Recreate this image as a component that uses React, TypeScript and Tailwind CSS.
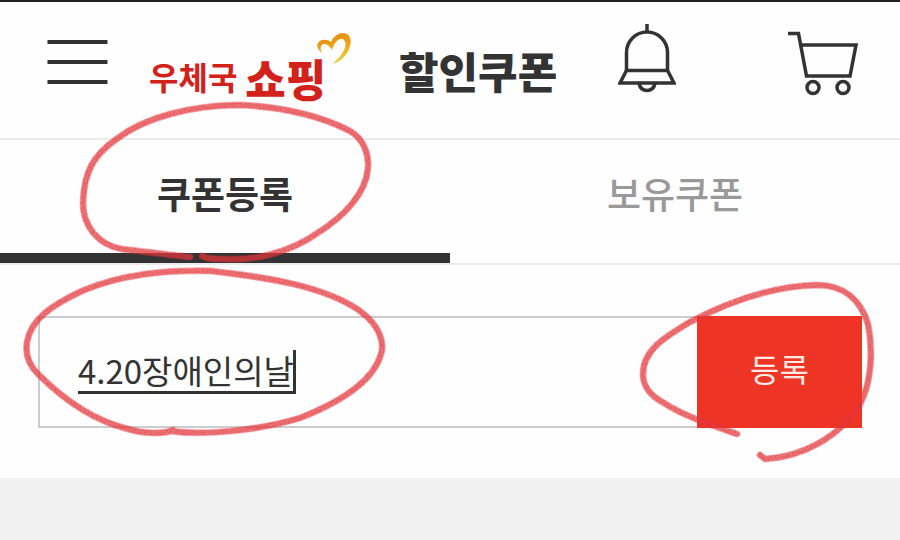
import React, { useState } from "react";

const INK = "#333333";

function MenuIcon() {
  return (
    <svg className="h-[76px] w-[62px]" viewBox="0 0 62 76" fill="none" stroke={INK} strokeWidth="4" aria-hidden="true">
      <path d="M0.500 18H60.500M0.500 38H60.500M0.500 58H60.500" />
    </svg>
  );
}

function BellIcon() {
  return (
    <svg className="h-[76px] w-[58px]" viewBox="0 0 58 76" fill="none" stroke={INK} strokeWidth="3.500" aria-hidden="true">
      <path d="M29 0V8" />
      <path d="M8.500 47V28.500a20.500 20.500 0 0 1 41 0V47" />
      <path d="M8.500 46.500H49.500L56 59H2Z" />
      <path d="M21 59.500c1 4.500 4 7 8 7s7-2.500 8-7" />
    </svg>
  );
}

function CartIcon() {
  return (
    <svg className="h-[76px] w-[70px]" viewBox="0 0 70 76" fill="none" stroke={INK} strokeWidth="3.500" aria-hidden="true">
      <path d="M0 9.500H10.500L18.500 52H62L68 21H13" />
      <circle cx="25" cy="63.500" r="6" />
      <circle cx="55" cy="63.500" r="6" />
    </svg>
  );
}

function HeartMark() {
  return (
    <svg className="absolute top-[8px] right-0 h-[34px] w-[34px]" viewBox="0 0 34 34" aria-hidden="true">
      <defs>
        <linearGradient id="gold" x1="0" y1="0" x2="0.3" y2="1">
          <stop offset="0" stopColor="#d98a17" />
          <stop offset="0.5" stopColor="#ef9f12" />
          <stop offset="1" stopColor="#e8cf3a" />
        </linearGradient>
      </defs>
      <path
        fill="url(#gold)"
        d="M5 21C1 18-1 14 1 11c2-3.500 9-4.500 13-1C16 5 21 1 26 1c6 0 8.500 5 7.500 11-1.500 9-8 17-18 20C22 26 28.500 19 28.500 12c0-3-1.500-5-4-5-5 0-8 6-9.500 11C13 14 10 11.500 7 12c-4 .5-4 4.500-2 9Z"
      />
    </svg>
  );
}

const STROKES = [
  "M190 257C170 255 148 252 122 249C98 245 83 226 83 203C84 172 93 155 118 138C146 117 190 106 236 105C285 106 325 118 350 131C364 139 369 155 368 168C366 193 345 216 316 234C290 252 255 261 226 259C215 259 207 259 202 256",
  "M173 430C165 434 145 434 128 429C91 420 60 396 38 374C28 364 25 354 27 342C31 319 52 305 82 291C122 274 165 270 211 271C265 277 325 286 360 311C379 325 385 342 381 354C373 383 338 403 300 418C260 430 205 436 170 431",
  "M737 434C711 425 684 416 664 403C649 395 643 386 643 374C643 350 665 337 690 322C728 302 772 286 817 285C845 285 861 301 868 324C873 349 872 382 860 404C840 437 802 457 765 459L760 455",
];

function PenMarks() {
  return (
    <svg className="pointer-events-none absolute inset-x-0 top-0 w-full" viewBox="0 0 900 540" fill="none" aria-hidden="true">
      <defs>
        <filter id="crayon" x="-5%" y="-5%" width="110%" height="110%">
          <feTurbulence type="fractalNoise" baseFrequency="0.6" numOctaves="2" seed="4" result="noise" />
          <feColorMatrix in="noise" type="matrix" values="0 0 0 0 0  0 0 0 0 0  0 0 0 0 0  2.500 0 0 0 -0.600" result="grain" />
          <feComposite in="SourceGraphic" in2="grain" operator="in" />
        </filter>
      </defs>
      <g strokeLinecap="round" strokeLinejoin="round">
        {STROKES.map((d) => (
          <React.Fragment key={d}>
            <path d={d} stroke="#ee343a" strokeOpacity="0.35" strokeWidth="7" />
            <path d={d} stroke="#ea343a" strokeOpacity="0.45" strokeWidth="5" />
            <path d={d} stroke="#d2363c" strokeOpacity="0.4" strokeWidth="6" filter="url(#crayon)" />
          </React.Fragment>
        ))}
      </g>
    </svg>
  );
}

export default function App() {
  const [code, setCode] = useState("4.20장애인의날");

  return (
    <div className="relative min-h-screen bg-[#f1f1f1] font-['Noto_Sans_CJK_KR',sans-serif] text-[#333333]">
      <header className="flex items-start justify-between border-t-2 border-b-2 border-t-[#222222] border-b-[#ebebeb] bg-[#fefefe] pt-[22px] pr-[42px] pb-[38px] pl-[47px]">
        <div className="flex h-[76px]">
          <button type="button" aria-label="메뉴">
            <MenuIcon />
          </button>
          <a href="#" className="relative ml-10 flex w-[202px] gap-2 font-bold whitespace-nowrap text-[#d3221c]">
            <span className="pt-8 text-[32px] leading-[40px]">우체국</span>
            <span className="pt-7 text-[44px] leading-[52px] font-black">쇼핑</span>
            <HeartMark />
          </a>
          <h1 className="ml-12 pt-5 text-[43px] leading-[52px] font-black whitespace-nowrap">할인쿠폰</h1>
        </div>
        <div className="flex gap-28">
          <button type="button" aria-label="알림">
            <BellIcon />
          </button>
          <button type="button" aria-label="장바구니">
            <CartIcon />
          </button>
        </div>
      </header>

      <nav className="grid grid-cols-2 border-b-2 border-[#ebebeb] bg-[#fefefe] text-center text-[37px] leading-[107px]">
        <a href="#register" className="border-b-10 border-[#333333] pb-1.5 font-bold">
          쿠폰등록
        </a>
        <a href="#owned" className="border-b-10 border-transparent pb-1.5 font-medium text-[#999999]">
          보유쿠폰
        </a>
      </nav>

      <main className="bg-[#fefefe] pt-[51px] pr-[38px] pb-[50px] pl-[38px]">
        <form className="flex h-28" onSubmit={(e) => e.preventDefault()}>
          <div className="relative min-w-0 flex-1">
            <input
              type="text"
              aria-label="쿠폰번호"
              value={code}
              onChange={(e) => setCode(e.target.value)}
              className="h-full w-full border-2 border-r-0 border-[#cccccc] bg-transparent px-[38px] pb-1 text-[33px] underline decoration-3 underline-offset-[7px] outline-none"
            />
            <span className="absolute top-[34px] left-[255px] h-11 w-[3px] bg-[#333333]" />
          </div>
          <button type="submit" className="w-[165px] bg-[#ee3424] pb-2 text-[32px] text-[#ffe9e0]">
            등록
          </button>
        </form>
      </main>

      <PenMarks />
    </div>
  );
}
